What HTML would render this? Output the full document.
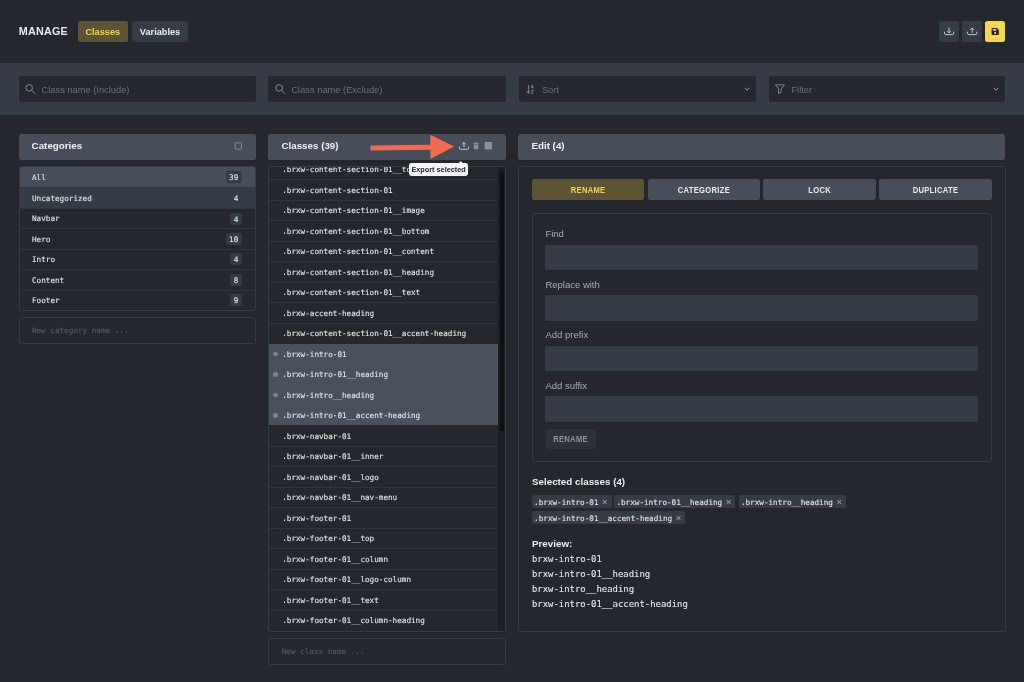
<!DOCTYPE html>
<html lang="en">
<head>
<meta charset="utf-8">
<title>Manage Classes</title>
<style>
*{box-sizing:border-box;margin:0;padding:0}
html,body{width:1024px;height:682px;overflow:hidden;background:#24272d}
body{will-change:transform;font-family:"Liberation Sans",sans-serif;color:#e6e8eb;position:relative;-webkit-font-smoothing:antialiased}
.abs{position:absolute}
.mono{font-family:"DejaVu Sans Mono","Liberation Mono",monospace;-webkit-text-stroke:.12px currentColor}
/* header */
#title{left:18.75px;top:22.6px;height:16px;line-height:16px;font-size:10.8px;font-weight:700;letter-spacing:.2px;color:#e8eaed;transform:scaleY(1.06);transform-origin:50% 72%}
.tab{top:21px;height:20.6px;border-radius:2.5px;font-weight:700;font-size:9.2px;line-height:20.6px;padding-top:.8px;text-align:center}
#tab-classes{left:77.7px;width:50.2px;background:#5d5436;color:#f5d548}
#tab-vars{left:131.8px;width:56.5px;background:#363c46;color:#eceef0}
.hbtn{top:21px;width:20.3px;height:20.6px;border-radius:2.5px;background:#363c46}
.hbtn svg{position:absolute;left:0;top:0;width:100%;height:100%}
/* filter bar */
#fbar{left:0;top:63px;width:1024px;height:51.6px;background:#353c45}
.finput{top:76px;height:25.7px;width:237.1px;background:#24272d;border-radius:2.5px;font-size:9.3px;line-height:25.7px;color:#6a707a}
.finput span{position:absolute;top:1.6px}
.finput svg{position:absolute}
/* panel headers */
.phead{top:134px;height:25.5px;background:#474e59;border-radius:2.5px;font-weight:700;font-size:9.8px;line-height:24.3px;color:#f0f1f3;padding-left:13px}
/* lists */
.box{border:1px solid #353b45;border-radius:2.5px;background:#24272d}
.row{position:absolute;left:0;right:0;font-size:7.65px;color:#e4e6e9;padding-left:12.4px;padding-top:1.7px}

.row .badge{position:absolute;right:12.8px;top:4.5px;height:12.1px;line-height:12.1px;padding:1px 3.6px 0;text-align:center;background:#353b45;border-radius:2.2px;color:#e4e6e9}
.row .badge.nobg{background:transparent}
.newinput{font-size:7.65px;color:#545a64;padding-left:12.3px;line-height:25.8px}
.crow{right:7px;padding-left:12.8px;padding-top:1.6px}
.crow.sel{background:transparent}
#selbg{left:0;right:7px;top:177px;height:81px;background:#4a515c}
.dot{position:absolute;left:4.1px;top:8.6px;width:4.6px;height:4.6px;border-radius:50%;background:#7e848e}

.etab{top:179.3px;width:112.6px;height:20.6px;line-height:20.6px;border-radius:2.4px;background:#474e59;color:#eceef0;font-weight:700;font-size:7.6px;letter-spacing:.3px;text-align:center;padding-top:1.4px}
.etab span,#renbtn span{display:inline-block;transform:scaleY(1.17);transform-origin:50% 72%}
.etab.act{background:#5d5436;color:#f5d548}
.flabel{left:545.4px;height:14px;line-height:14px;font-size:9.5px;color:#a7acb4}
.finp{left:545.3px;width:433.1px;height:25px;background:#363c46;border-radius:2px}
#renbtn{left:545.5px;top:428.5px;width:50.1px;height:20.1px;line-height:20.1px;padding-top:1px;border-radius:2.4px;background:#2d3138;color:#8d939d;font-weight:700;font-size:7.6px;letter-spacing:.3px;text-align:center}
.shead{left:532px;height:14px;line-height:14px;font-size:9.8px;font-weight:700;color:#eceef0}
.chip{height:12.5px;line-height:12.5px;background:#363c46;border-radius:2px;font-size:7.65px;color:#e4e6e9;padding-left:2px;padding-top:1.4px;white-space:nowrap}
.chip b{font-weight:400;font-family:"Liberation Sans",sans-serif;font-size:9.4px;color:#9aa0a8;margin-left:3.6px;position:relative;top:.4px;line-height:0}
.pv{left:532px;height:15px;line-height:15px;font-size:8.94px;color:#e4e6e9}

#tip{left:409px;top:163.2px;width:59.2px;height:12.4px;line-height:12.4px;padding-top:1px;border-radius:2.4px;background:#f3f4f6;color:#23262b;font-weight:700;font-size:7.3px;text-align:center;white-space:nowrap}
</style>
</head>
<body>

<!-- top header -->
<div class="abs" id="title">MANAGE</div>
<div class="abs tab" id="tab-classes">Classes</div>
<div class="abs tab" id="tab-vars">Variables</div>

<div class="abs hbtn" style="left:939px"></div>
<div class="abs hbtn" style="left:962px"></div>
<div class="abs hbtn" style="left:985px;background:#f7d654"></div>

<!-- filter bar -->
<div class="abs" id="fbar"></div>
<div class="abs finput" style="left:18.6px"><span style="left:23px">Class name (Include)</span></div>
<div class="abs finput" style="left:268.4px;width:237.2px"><span style="left:23px">Class name (Exclude)</span></div>
<div class="abs finput" style="left:518.6px;width:237px"><span style="left:23.3px">Sort</span></div>
<div class="abs finput" style="left:768.6px;width:236.8px"><span style="left:22.8px">Filter</span></div>

<!-- panel headers -->
<div class="abs phead" style="left:18.6px;width:237.1px">Categories</div>
<div class="abs phead" style="left:268.4px;width:237.2px">Classes (39)</div>
<div class="abs phead" style="left:518.4px;width:487px">Edit (4)</div>

<!-- categories list -->
<div class="abs box" id="catlist" style="left:18.6px;top:166px;width:237.1px;height:144.6px;overflow:hidden">
<div class="row mono" style="top:-1px;height:21px;line-height:20.5px;background:#474e59;">All<span class="badge">39</span></div>
<div class="row mono" style="top:20px;height:20.6px;line-height:20.5px;background:#353c45;">Uncategorized<span class="badge nobg">4</span></div>
<div class="row mono" style="padding-top:1px;top:41px;height:20.6px;line-height:20.5px;box-shadow:inset 0 1px 0 #30353d;">Navbar<span class="badge">4</span></div>
<div class="row mono" style="top:61.4px;height:20.6px;line-height:20.5px;box-shadow:inset 0 1px 0 #30353d;">Hero<span class="badge">10</span></div>
<div class="row mono" style="padding-top:1px;top:81.9px;height:20.6px;line-height:20.5px;box-shadow:inset 0 1px 0 #30353d;">Intro<span class="badge">4</span></div>
<div class="row mono" style="top:102.4px;height:20.6px;line-height:20.5px;box-shadow:inset 0 1px 0 #30353d;">Content<span class="badge">8</span></div>
<div class="row mono" style="top:122.8px;height:20.6px;line-height:20.5px;box-shadow:inset 0 1px 0 #30353d;">Footer<span class="badge">9</span></div>
</div>
<div class="abs box mono newinput" style="left:18.6px;top:317.3px;width:237.1px;height:26.7px">New category name ...</div>
<!-- classes list -->
<div class="abs box" id="cllist" style="left:268.4px;top:166px;width:237.2px;height:466px;overflow:hidden">
<div class="abs" id="selbg"></div>
<div class="row crow mono" style="top:-8.50px;height:20.5px;line-height:20.5px;">.brxw-content-section-01__top</div>
<div class="row crow mono" style="top:12.00px;height:20.5px;line-height:20.5px;box-shadow:inset 0 1px 0 #30353d;">.brxw-content-section-01</div>
<div class="row crow mono" style="top:32.50px;height:20.5px;line-height:20.5px;box-shadow:inset 0 1px 0 #30353d;">.brxw-content-section-01__image</div>
<div class="row crow mono" style="top:53.00px;height:20.5px;line-height:20.5px;box-shadow:inset 0 1px 0 #30353d;">.brxw-content-section-01__bottom</div>
<div class="row crow mono" style="top:73.50px;height:20.5px;line-height:20.5px;box-shadow:inset 0 1px 0 #30353d;">.brxw-content-section-01__content</div>
<div class="row crow mono" style="top:94.00px;height:20.5px;line-height:20.5px;box-shadow:inset 0 1px 0 #30353d;">.brxw-content-section-01__heading</div>
<div class="row crow mono" style="top:114.50px;height:20.5px;line-height:20.5px;box-shadow:inset 0 1px 0 #30353d;">.brxw-content-section-01__text</div>
<div class="row crow mono" style="top:135.00px;height:20.5px;line-height:20.5px;box-shadow:inset 0 1px 0 #30353d;">.brxw-accent-heading</div>
<div class="row crow mono" style="top:155.50px;height:20.5px;line-height:20.5px;box-shadow:inset 0 1px 0 #30353d;">.brxw-content-section-01__accent-heading</div>
<div class="row crow mono sel" style="top:176.00px;height:20.5px;line-height:20.5px;"><i class="dot"></i>.brxw-intro-01</div>
<div class="row crow mono sel" style="top:196.50px;height:20.5px;line-height:20.5px;"><i class="dot"></i>.brxw-intro-01__heading</div>
<div class="row crow mono sel" style="top:217.00px;height:20.5px;line-height:20.5px;"><i class="dot"></i>.brxw-intro__heading</div>
<div class="row crow mono sel" style="top:237.50px;height:20.5px;line-height:20.5px;"><i class="dot"></i>.brxw-intro-01__accent-heading</div>
<div class="row crow mono" style="top:258.00px;height:20.5px;line-height:20.5px;">.brxw-navbar-01</div>
<div class="row crow mono" style="top:278.50px;height:20.5px;line-height:20.5px;box-shadow:inset 0 1px 0 #30353d;">.brxw-navbar-01__inner</div>
<div class="row crow mono" style="top:299.00px;height:20.5px;line-height:20.5px;box-shadow:inset 0 1px 0 #30353d;">.brxw-navbar-01__logo</div>
<div class="row crow mono" style="top:319.50px;height:20.5px;line-height:20.5px;box-shadow:inset 0 1px 0 #30353d;">.brxw-navbar-01__nav-menu</div>
<div class="row crow mono" style="top:340.00px;height:20.5px;line-height:20.5px;box-shadow:inset 0 1px 0 #30353d;">.brxw-footer-01</div>
<div class="row crow mono" style="top:360.50px;height:20.5px;line-height:20.5px;box-shadow:inset 0 1px 0 #30353d;">.brxw-footer-01__top</div>
<div class="row crow mono" style="top:381.00px;height:20.5px;line-height:20.5px;box-shadow:inset 0 1px 0 #30353d;">.brxw-footer-01__column</div>
<div class="row crow mono" style="top:401.50px;height:20.5px;line-height:20.5px;box-shadow:inset 0 1px 0 #30353d;">.brxw-footer-01__logo-column</div>
<div class="row crow mono" style="top:422.00px;height:20.5px;line-height:20.5px;box-shadow:inset 0 1px 0 #30353d;">.brxw-footer-01__text</div>
<div class="row crow mono" style="top:442.50px;height:20.5px;line-height:20.5px;box-shadow:inset 0 1px 0 #30353d;">.brxw-footer-01__column-heading</div>
<div class="abs" style="right:0;top:0;bottom:0;width:7px;background:#1a1d21"></div>
<div class="abs" style="right:0.6px;top:5px;width:4.3px;height:259px;background:#0e1113;border-radius:2.2px"></div>
</div>
<div class="abs box mono newinput" style="left:268.4px;top:637.8px;width:237.2px;height:26.8px">New class name ...</div>

<!-- edit panel -->
<div class="abs box" id="editbox" style="left:518.4px;top:166px;width:487.3px;height:466px"></div>
<div class="abs etab act" style="left:531.8px"><span>RENAME</span></div>
<div class="abs etab" style="left:647.6px"><span>CATEGORIZE</span></div>
<div class="abs etab" style="left:763.4px"><span>LOCK</span></div>
<div class="abs etab" style="left:879.2px"><span>DUPLICATE</span></div>
<div class="abs box" id="formbox" style="left:531.8px;top:212.6px;width:460.2px;height:249.6px"></div>
<div class="abs flabel" style="top:227.0px">Find</div>
<div class="abs finp" style="top:245.0px"></div>
<div class="abs flabel" style="top:277.6px">Replace with</div>
<div class="abs finp" style="top:295.2px;height:25.6px"></div>
<div class="abs flabel" style="top:328.3px">Add prefix</div>
<div class="abs finp" style="top:345.8px"></div>
<div class="abs flabel" style="top:378.6px">Add suffix</div>
<div class="abs finp" style="top:396.1px;height:25.6px"></div>
<div class="abs" id="renbtn"><span>RENAME</span></div>
<div class="abs shead" style="top:474.6px">Selected classes (4)</div>
<div class="abs chip mono" style="left:532.1px;top:495.3px;width:79.8px">.brxw-intro-01<b>×</b></div>
<div class="abs chip mono" style="left:614.4px;top:495.3px;width:120.5px">.brxw-intro-01__heading<b>×</b></div>
<div class="abs chip mono" style="left:738.9px;top:495.3px;width:106.9px">.brxw-intro__heading<b>×</b></div>
<div class="abs chip mono" style="left:532.1px;top:511.4px;width:153.1px">.brxw-intro-01__accent-heading<b>×</b></div>
<div class="abs shead" style="top:536.6px">Preview:</div>
<div class="abs mono pv" style="top:551.9px">brxw-intro-01</div>
<div class="abs mono pv" style="top:567.0px">brxw-intro-01__heading</div>
<div class="abs mono pv" style="top:582.2px">brxw-intro__heading</div>
<div class="abs mono pv" style="top:596.7px">brxw-intro-01__accent-heading</div>

<!-- icons -->
<svg class="abs" style="left:23px;top:82px;width:14px;height:14px" viewBox="23 82 14 14" ><circle cx="29.2" cy="87.9" r="3.3" fill="none" stroke="#8a9099" stroke-width=".95"/><path d="M31.6 90.3L34.9 93.7" stroke="#8a9099" stroke-width=".95" stroke-linecap="round"/></svg>
<svg class="abs" style="left:272.9px;top:82px;width:14px;height:14px" viewBox="272.9 82 14 14" ><circle cx="279.1" cy="87.9" r="3.3" fill="none" stroke="#8a9099" stroke-width=".95"/><path d="M281.5 90.3L284.8 93.7" stroke="#8a9099" stroke-width=".95" stroke-linecap="round"/></svg>
<svg class="abs" style="left:524px;top:82px;width:14px;height:14px" viewBox="524 82 14 14" ><path d="M528.4 84.8V93.2M526.5 91.2L528.4 93.3L530.3 91.2" fill="none" stroke="#8a9099" stroke-width=".9"/><path d="M531.2 88.2L532.3 84.8L533.4 88.2M531.5 87.2H533.1" fill="none" stroke="#8a9099" stroke-width=".75"/><path d="M531.2 90.2H533.4L531.2 93.4H533.5" fill="none" stroke="#8a9099" stroke-width=".75"/></svg>
<svg class="abs" style="left:773px;top:82px;width:14px;height:14px" viewBox="773 82 14 14" ><path d="M775.4 84.9H784.5L781.1 88.9V92.3L778.6 93.6V88.9Z" fill="none" stroke="#8a9099" stroke-width=".9" stroke-linejoin="round"/></svg>
<svg class="abs" style="left:742.5px;top:85px;width:8px;height:8px" viewBox="742.5 85 8 8" ><path d="M744.2 87.8L746.5 90.3L748.8 87.8" fill="none" stroke="#9aa0a8" stroke-width=".95"/></svg>
<svg class="abs" style="left:992.4px;top:85px;width:8px;height:8px" viewBox="992.4 85 8 8" ><path d="M994.1 87.8L996.4 90.3L998.7 87.8" fill="none" stroke="#9aa0a8" stroke-width=".95"/></svg>
<svg class="abs" style="left:939px;top:21px;width:20.3px;height:20.6px" viewBox="939 21 20.3 20.6" ><path d="M949 27.6V32.6M947.2 31.1L949 32.9L950.8 31.1" fill="none" stroke="#c8ccd2" stroke-width=".95"/><path d="M944.5 31.6V33.2Q944.5 34.6 945.9 34.6H952.3Q953.7 34.6 953.7 33.2V31.6" fill="none" stroke="#c8ccd2" stroke-width=".95"/></svg>
<svg class="abs" style="left:962px;top:21px;width:20.3px;height:20.6px" viewBox="962 21 20.3 20.6" ><path d="M972.2 32.8V28.2M970.4 29.8L972.2 28L974 29.8" fill="none" stroke="#c8ccd2" stroke-width=".95"/><path d="M967.5 31.6V33.2Q967.5 34.6 968.9 34.6H975.3Q976.7 34.6 976.7 33.2V31.6" fill="none" stroke="#c8ccd2" stroke-width=".95"/></svg>
<svg class="abs" style="left:985px;top:21px;width:20.3px;height:20.6px" viewBox="985 21 20.3 20.6" ><path d="M991.6 28.9Q991.6 28 992.5 28H996.9L998.8 29.9V34.1Q998.8 35 997.9 35H992.5Q991.6 35 991.6 34.1Z" fill="#1c1c1c"/><rect x="992.8" y="29" width="3.6" height="1.7" fill="#f7d654"/><circle cx="995.2" cy="32.9" r="1.05" fill="#f7d654"/></svg>
<svg class="abs" style="left:233px;top:141px;width:10px;height:10px" viewBox="233 141 10 10" ><rect x="235.2" y="142.9" width="6.3" height="6.3" rx=".6" fill="none" stroke="#8d939d" stroke-width=".9"/></svg>
<svg class="abs" style="left:368px;top:133px;width:88px;height:28px" viewBox="368 133 88 28" ><path d="M370.5 145.6L430.3 144.8V134.8L454.3 146.4L430.3 159V149.7L370.5 150.6Z" fill="#f06c51"/></svg>
<svg class="abs" style="left:457px;top:140px;width:14px;height:12px" viewBox="457 140 14 12" ><path d="M464 147.2V142.7M462.2 144.3L464 142.5L465.8 144.3" fill="none" stroke="#c8ccd2" stroke-width=".95"/><path d="M459.4 146.7V148Q459.4 149.3 460.7 149.3H467.3Q468.6 149.3 468.6 148V146.7" fill="none" stroke="#c8ccd2" stroke-width=".95"/></svg>
<svg class="abs" style="left:472px;top:140px;width:8px;height:12px" viewBox="472 140 8 12" ><path d="M473.3 143.2H478.9V144H473.3ZM475.1 142.2H477.1V143.2H475.1ZM473.8 144.5H478.4V148.4Q478.4 149.2 477.6 149.2H474.6Q473.8 149.2 473.8 148.4Z" fill="#8d939d"/></svg>
<svg class="abs" style="left:484px;top:141px;width:9px;height:9px" viewBox="484 141 9 9" ><rect x="484.7" y="142.1" width="7.4" height="7.3" rx=".6" fill="#8d939d"/></svg>
<div class="abs" id="tip">Export selected</div>
<svg class="abs" style="left:457px;top:160px;width:8px;height:4px" viewBox="457 160 8 4" ><path d="M458.1 163.7L460.8 160.9L463.5 163.7Z" fill="#f3f4f6"/></svg>

</body>
</html>
